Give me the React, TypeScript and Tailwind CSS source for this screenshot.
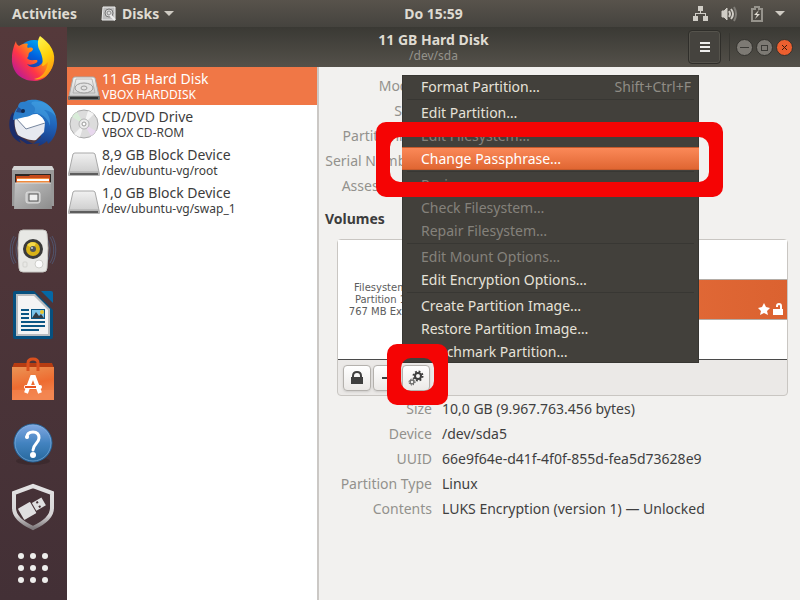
import type { ReactNode } from "react";

const devices = [
  { name: "11 GB Hard Disk", detail: "VBOX HARDDISK", kind: "disk", selected: true },
  { name: "CD/DVD Drive", detail: "VBOX CD-ROM", kind: "cd", selected: false },
  { name: "8,9 GB Block Device", detail: "/dev/ubuntu-vg/root", kind: "block", selected: false },
  { name: "1,0 GB Block Device", detail: "/dev/ubuntu-vg/swap_1", kind: "block", selected: false },
];

type Item = { label: string; disabled?: boolean; active?: boolean; shortcut?: string };

const menuGroups: Item[][] = [
  [{ label: "Format Partition…", shortcut: "Shift+Ctrl+F" }],
  [
    { label: "Edit Partition…" },
    { label: "Edit Filesystem…", disabled: true },
    { label: "Change Passphrase…", active: true },
  ],
  [
    { label: "Resize…", disabled: true },
    { label: "Check Filesystem…", disabled: true },
    { label: "Repair Filesystem…", disabled: true },
  ],
  [{ label: "Edit Mount Options…", disabled: true }, { label: "Edit Encryption Options…" }],
  [
    { label: "Create Partition Image…" },
    { label: "Restore Partition Image…" },
    { label: "Benchmark Partition…" },
  ],
];

const driveLabels = ["Model", "Size", "Partitioning", "Serial Number", "Assessment"];

const volumeFacts = [
  ["Size", "10,0 GB (9.967.763.456 bytes)"],
  ["Device", "/dev/sda5"],
  ["UUID", "66e9f64e-d41f-4f0f-855d-fea5d73628e9"],
  ["Partition Type", "Linux"],
  ["Contents", "LUKS Encryption (version 1) — Unlocked"],
];

function FirefoxIcon() {
  return (
    <svg width="48" height="48" viewBox="0 0 48 48" aria-hidden="true">
      <defs>
        <linearGradient id="ffBody" x1="1" y1="0.1" x2="0.1" y2="0.9">
          <stop offset="0" stopColor="#fff44f" />
          <stop offset="0.35" stopColor="#ff980e" />
          <stop offset="0.65" stopColor="#ff3647" />
          <stop offset="1" stopColor="#b5179e" />
        </linearGradient>
        <linearGradient id="ffGlobe" x1="0.8" y1="0" x2="0.3" y2="1">
          <stop offset="0" stopColor="#00b3f4" />
          <stop offset="0.5" stopColor="#0060df" />
          <stop offset="1" stopColor="#362b7d" />
        </linearGradient>
        <linearGradient id="ffTail" x1="0.3" y1="0" x2="0.7" y2="1">
          <stop offset="0" stopColor="#fff44f" />
          <stop offset="0.5" stopColor="#ffd20a" />
          <stop offset="1" stopColor="#ff8a16" />
        </linearGradient>
      </defs>
      <circle cx="25" cy="22" r="17" fill="url(#ffGlobe)" />
      <path
        d="M7 6c0 2 1 4 3 5 3-2 6-3 9-2-1 2-1 3 0 4 3-1 5 0 5 1 0 2-3 3-4 4-1 2 0 4-2 5 2 3 6 2 9 2 2 0 2 2 0 3-4 2-7 2-9 1 4 5 12 4 16-2 3-6 1-12-3-16 6 3 10 7 11 3 6 12-1 32-16 32C10 46 2 35 3 22c0-5 2-12 4-16z"
        fill="url(#ffBody)"
      />
      <path
        d="M31 1c4 3 9 7 12 13 5 10 1 21-6 27-5 3-9 4-12 3 8-1 13-8 14-17-2 2-4 4-6 4 2-7-1-13-3-17-2-5-1-10 1-13z"
        fill="url(#ffTail)"
      />
    </svg>
  );
}

function ThunderbirdIcon() {
  return (
    <svg width="48" height="48" viewBox="0 0 48 48" aria-hidden="true">
      <defs>
        <linearGradient id="tbBody" x1="0.6" y1="0" x2="0.4" y2="1">
          <stop offset="0" stopColor="#2e8fd8" />
          <stop offset="0.5" stopColor="#1f62b8" />
          <stop offset="1" stopColor="#17357d" />
        </linearGradient>
      </defs>
      <path d="M4 13C0 18-1 27 2 34c2 5 6 8 10 10l-2-4 8 5h6L8 36C5 31 5 24 6 18z" fill="#1b2d6b" />
      <path d="M14 4c2-1 4-3 7-3 15-2 27 9 27 24 0 8-3 15-9 20l-1-3c-3 3-6 4-9 5l2-3-7 1 8-7z" fill="url(#tbBody)" />
      <path d="M23 3c12-2 21 4 24 15-4-5-8-7-12-7 4 3 7 9 6 16-3-9-8-13-17-13l-6 2z" fill="#4aa8e8" opacity="0.5" />
      <path d="M6 18 28 15c4 2 7 5 8 9l-1 9-8 8c-6 1-13-2-18-5-3-5-4-12-3-18z" fill="#e6e9f0" />
      <path d="m6 18 22-3c4 2 7 5 8 9l-18 6z" fill="#fff" />
      <path d="m6 18 11 12 19-6" fill="none" stroke="#76869e" />
      <path d="M9 8c0-3 2-5 4-5 5-1 11 2 13 6 1 5-5 9-10 9L4 21C4 16 6 11 9 8z" fill="#2b7fcc" />
      <path d="m9 8-2 5 7 1-2-4z" fill="#244b8c" />
      <circle cx="14" cy="12" r="2" fill="#12294f" />
    </svg>
  );
}

function FilesIcon() {
  return (
    <svg width="48" height="48" viewBox="0 0 48 48" aria-hidden="true">
      <defs>
        <linearGradient id="flBody" x1="0" y1="0" x2="1" y2="1">
          <stop offset="0" stopColor="#c2c2c2" />
          <stop offset="1" stopColor="#8c8c8c" />
        </linearGradient>
      </defs>
      <path d="M5 3h38l2 3v37H3V6z" fill="#999" />
      <path d="M5 3h38l2 4H3z" fill="#d5d5d5" />
      <rect x="6" y="11" width="36" height="10" fill="#2b2725" />
      <path d="M7 13h13l1-1h20v9H7z" fill="#c4491b" />
      <rect x="8" y="15" width="32" height="2" fill="#f08a3c" />
      <rect x="8" y="16" width="32" height="2" fill="#fff" />
      <rect x="8" y="18" width="32" height="2" fill="#f08a3c" />
      <path d="M6 20h36l1 26H5z" fill="url(#flBody)" />
      <path d="M6 20h36" stroke="#dedede" />
      <rect x="17" y="29" width="14" height="11" rx="2" fill="#c6c6c6" stroke="#dedede" />
      <rect x="20" y="31" width="9" height="7" fill="#efefef" stroke="#555" />
    </svg>
  );
}

function RhythmboxIcon() {
  return (
    <svg width="48" height="48" viewBox="0 0 48 48" aria-hidden="true">
      <g fill="none" stroke="#536d98" opacity="0.55">
        <path d="M5 9c-5 8-5 20 0 28M7 10c-5 8-5 18 0 26M10 11c-4 8-4 16 0 24M43 9c5 8 5 20 0 28M41 10c5 8 5 18 0 26M38 11c4 8 4 16 0 24" />
      </g>
      <path d="M14 3h20q4 0 4 4l1 14-1 20q0 4-4 4H14q-4 0-4-4L9 21l1-14q0-4 4-4z" fill="#e8e8e5" stroke="#c8c8c4" />
      <circle cx="24" cy="22" r="10" fill="#3a3a3a" />
      <circle cx="24" cy="22" r="7" fill="#d8b217" />
      <path d="M18 18a7 7 0 0 1 9-2l-3 6z" fill="#f3d84a" />
      <circle cx="24" cy="22" r="3" fill="#4f5357" />
      <circle cx="23" cy="21" r="1" fill="#c9d2da" />
      <circle cx="30" cy="37" r="4" fill="#fbfbfb" stroke="#cfcfcb" />
      <rect x="14" y="35" width="4" height="5" rx="1" fill="none" stroke="#d3d3cf" />
    </svg>
  );
}

function WriterIcon() {
  return (
    <svg width="48" height="48" viewBox="0 0 48 48" aria-hidden="true">
      <path d="M6 0h19l19 19v27q0 2-2 2H6q-2 0-2-2V2q0-2 2-2z" fill="#06507f" />
      <path d="M32 0h10q2 0 2 2v10z" fill="#0568a5" />
      <path d="M7 3h19l15 15v27H7z" fill="#b9bcbf" />
      <path d="M9 5h16l14 14v24H9z" fill="#f4f4f4" />
      <g fill="#0b5684">
        <rect x="12" y="18" width="8" height="2" />
        <rect x="12" y="22" width="8" height="2" />
        <rect x="12" y="26" width="8" height="2" />
        <rect x="12" y="30" width="24" height="2" />
        <rect x="12" y="34" width="24" height="2" />
        <rect x="12" y="38" width="18" height="2" />
        <rect x="22" y="18" width="14" height="10" />
      </g>
      <rect x="23" y="19" width="12" height="8" fill="#7cc4ea" />
      <circle cx="33" cy="21" r="2" fill="#e7c52d" />
      <path d="m23 27 4-6 3 4 2-2 3 4z" fill="#333c44" />
    </svg>
  );
}

function SoftwareIcon() {
  return (
    <svg width="48" height="48" viewBox="0 0 48 48" aria-hidden="true">
      <defs>
        <linearGradient id="swBag" x1="0" y1="0" x2="0.3" y2="1">
          <stop offset="0" stopColor="#eb9455" />
          <stop offset="0.6" stopColor="#ee6c31" />
          <stop offset="1" stopColor="#f1824c" />
        </linearGradient>
      </defs>
      <path d="M5 8h38l2 5H3z" fill="#b63c12" />
      <path d="M3 12h42v33H3z" fill="url(#swBag)" />
      <path d="M3 35h42v10H3z" fill="#f58a55" opacity="0.5" />
      <path d="M19 16V8q0-4 5-4t5 4v8" fill="none" stroke="#d9501e" strokeWidth="3" />
      <path d="m17 38 6-16h2l6 16" fill="none" stroke="#fff" strokeWidth="4" />
      <rect x="15" y="30" width="18" height="4" rx="2" fill="#fff" />
      <rect x="16" y="31" width="11" height="2" fill="#e95420" />
    </svg>
  );
}

function HelpIcon() {
  return (
    <svg width="48" height="48" viewBox="0 0 48 48" aria-hidden="true">
      <defs>
        <linearGradient id="hpBall" x1="0" y1="0" x2="0" y2="1">
          <stop offset="0" stopColor="#81a8e2" />
          <stop offset="0.5" stopColor="#4383c0" />
          <stop offset="1" stopColor="#26689c" />
        </linearGradient>
      </defs>
      <ellipse cx="24" cy="42" rx="17" ry="4" fill="#000" opacity="0.15" />
      <circle cx="24" cy="24" r="19" fill="url(#hpBall)" stroke="#225f94" />
      <circle cx="24" cy="24" r="18" fill="none" stroke="#88b2dd" opacity="0.6" />
      <path d="M18 18q0-5 6-5t6 6c0 5-6 6-6 12" fill="none" stroke="#fff" strokeWidth="3" strokeLinecap="round" />
      <circle cx="18" cy="18" r="2" fill="#fff" />
      <circle cx="24" cy="36" r="3" fill="#fff" />
    </svg>
  );
}

function UsbShieldIcon() {
  return (
    <svg width="48" height="48" viewBox="0 0 48 48" aria-hidden="true">
      <defs>
        <linearGradient id="shRim" x1="0" y1="0" x2="0" y2="1">
          <stop offset="0" stopColor="#e3e2e3" />
          <stop offset="0.7" stopColor="#d6d4d5" />
          <stop offset="1" stopColor="#807a7d" />
        </linearGradient>
      </defs>
      <path d="M24 3 43 10v15c0 9-8 15-19 20C13 40 5 34 5 25V10z" fill="none" stroke="url(#shRim)" strokeWidth="4" />
      <g transform="rotate(-30 24 24)" fill="#e0dfe0">
        <rect x="10" y="18" width="14" height="13" rx="1" />
        <path fillRule="evenodd" d="M25 20h11v9H25zM29 21h2v2h-2zM29 26h2v2h-2z" />
      </g>
    </svg>
  );
}

function AppGridIcon() {
  return (
    <svg width="48" height="48" viewBox="0 0 48 48" aria-hidden="true" fill="#eeeeec">
      {[9, 21, 33].map((y) => [12, 24, 36].map((x) => <circle key={`${x}-${y}`} cx={x} cy={y} r="3" />))}
    </svg>
  );
}

function DeviceIcon({ kind }: { kind: string }) {
  if (kind === "cd") {
    return (
      <svg width="32" height="32" viewBox="0 0 32 32" aria-hidden="true">
        <circle cx="16" cy="16" r="14" fill="#dcdcdc" stroke="#a9a9a9" />
        <path d="M16 16 4 9a14 14 0 0 1 5-5z" fill="#d8ecd8" />
        <path d="m16 16 12 7a14 14 0 0 1-5 5z" fill="#e8d8ee" />
        <path d="m16 16 4-13a14 14 0 0 1 6 3z" fill="#f4f4f4" />
        <path d="m16 16-4 13a14 14 0 0 1-6-3z" fill="#f4f4f4" />
        <circle cx="16" cy="16" r="5" fill="#ececec" stroke="#b4b4b4" />
        <circle cx="16" cy="16" r="2" fill="#fff" stroke="#999" />
      </svg>
    );
  }
  const disk = kind === "disk";
  return (
    <svg width="32" height="32" viewBox="0 0 32 32" aria-hidden="true">
      <defs>
        <linearGradient id="dkTop" x1="0" y1="0" x2="0" y2="1">
          <stop offset="0" stopColor="#f1f1f1" />
          <stop offset="1" stopColor="#cfcfcf" />
        </linearGradient>
      </defs>
      <path d="M7 7h18q1 0 2 1l4 18H1L5 8q1-1 2-1z" fill="url(#dkTop)" stroke="#a8a8a8" />
      <rect x="0" y="26" width="32" height="4" rx="1" fill={disk ? "#6d6d6d" : "#b5b5b5"} />
      <rect x="2" y="27" width="28" height="2" fill={disk ? "#2f2f2f" : "#5d5d5d"} />
      {disk && (
        <g fill="none" stroke="#9c9c9c">
          <path d="M8 9h16l3 14H5z" opacity="0.6" />
          <ellipse cx="16" cy="18" rx="9" ry="5" fill="#e3e3e3" />
          <ellipse cx="16" cy="18" rx="3" ry="2" />
        </g>
      )}
    </svg>
  );
}

/* Rounded red frame that calls out one region of the window. */
function Callout({ w, h, ringX, ringY }: { w: number; h: number; ringX: number; ringY: number }) {
  const r = 10;
  const box = (x: number, y: number, bw: number, bh: number) =>
    `M${x + r} ${y}h${bw - 2 * r}a${r} ${r} 0 0 1 ${r} ${r}v${bh - 2 * r}a${r} ${r} 0 0 1 -${r} ${r}h-${bw - 2 * r}a${r} ${r} 0 0 1 -${r} -${r}v-${bh - 2 * r}a${r} ${r} 0 0 1 ${r} -${r}z`;
  return (
    <svg width={w} height={h} aria-hidden="true">
      <path
        fillRule="evenodd"
        fill="#f50404"
        d={box(0, 0, w, h) + box(ringX, ringY, w - 2 * ringX, h - 2 * ringY)}
      />
    </svg>
  );
}

function GearsIcon() {
  return (
    <svg width="16" height="16" viewBox="0 0 16 16" fill="none" stroke="#3f3f3f" aria-hidden="true">
      <circle cx="10" cy="6" r="3" strokeWidth="2" />
      <circle cx="10" cy="6" r="4.500" strokeWidth="2" strokeDasharray="1.770 1.770" />
      <circle cx="4" cy="12" r="2" strokeWidth="1" />
      <circle cx="4" cy="12" r="3" strokeWidth="1" strokeDasharray="1.200 1.200" />
    </svg>
  );
}

function ToolButton({ label, children }: { label: string; children: ReactNode }) {
  return (
    <button
      type="button"
      aria-label={label}
      className="flex h-[26px] w-[28px] items-center justify-center rounded border border-[#b4b1ad] bg-gradient-to-b from-white to-[#ebe9e7] text-[#3f3f3f] shadow-sm"
    >
      {children}
    </button>
  );
}

function TopBar() {
  return (
    <header className="grid h-[27px] shrink-0 grid-cols-[67px_1fr_auto_1fr] items-center bg-gradient-to-b from-[#58534c] to-[#45433e] text-[14px] font-bold text-[#dfdbd2]">
      <nav className="col-span-2 flex items-center pl-3">
        <button type="button">Activities</button>
        <button type="button" className="ml-6 flex items-center">
          <svg width="16" height="16" viewBox="0 0 16 16" aria-hidden="true">
            <path d="M2 1h12v13H1z" fill="#bdbdbd" stroke="#efefef" />
            <circle cx="8" cy="7" r="4" fill="#dadada" stroke="#777" />
            <circle cx="8" cy="7" r="2" fill="none" stroke="#888" />
            <path d="m9 9 5 5" stroke="#eee" strokeWidth="2" />
          </svg>
          <span className="ml-[5px]">Disks</span>
          <svg className="ml-[5px]" width="10" height="6" aria-hidden="true">
            <path d="M0 0h10L5 5z" fill="#cfcbc3" />
          </svg>
        </button>
      </nav>
      <time>Do 15:59</time>
      <div className="flex items-center justify-end pr-[15px]">
        <svg width="16" height="16" viewBox="0 0 16 16" fill="#d0cdc6" aria-hidden="true">
          <path d="M5 0h5v5H5zM0 10h5v5H0zM10 10h5v5h-5zM7 5h1v3H7zM2 7h11v3h-1V8H3v2H2z" />
        </svg>
        <svg className="ml-3" width="16" height="16" viewBox="0 0 16 16" fill="none" stroke="#d0cdc6" aria-hidden="true">
          <path d="M1 5h2l3-3v12l-3-3H1z" fill="#d0cdc6" />
          <path d="M8 5q2 3 0 6M10 3q4 5 0 10" strokeWidth="2" />
          <path d="M13 1q4 7 0 14" strokeWidth="2" stroke="#7f7c76" />
        </svg>
        <svg className="ml-[14px]" width="12" height="16" viewBox="0 0 12 16" fill="none" stroke="#96938c" aria-hidden="true">
          <path d="M1 3h3V1h4v2h3v12H1z" strokeWidth="2" />
          <path d="M8 4 3 9h3l-2 4 5-5H6z" fill="#dfdbd2" stroke="none" />
        </svg>
        <svg className="ml-3" width="10" height="6" aria-hidden="true">
          <path d="M0 0h10L5 5z" fill="#cfcbc3" />
        </svg>
      </div>
    </header>
  );
}

function Dock() {
  return (
    <nav aria-label="Dock" className="flex w-[67px] shrink-0 flex-col items-start gap-4 bg-gradient-to-b from-[#55393b] to-[#433036] pt-2 pl-[9px]">
      <FirefoxIcon />
      <ThunderbirdIcon />
      <FilesIcon />
      <RhythmboxIcon />
      <WriterIcon />
      <SoftwareIcon />
      <HelpIcon />
      <UsbShieldIcon />
      <AppGridIcon />
    </nav>
  );
}

function WindowHeader() {
  const round = "flex size-[17px] items-center justify-center rounded-full border border-[#33322e]";
  return (
    <header className="grid h-10 shrink-0 grid-cols-[1fr_auto_1fr] items-center bg-gradient-to-b from-[#3a3934] to-[#54514a]">
      <span />
      <div className="text-center">
        <h1 className="text-[14px] leading-[16px] font-bold text-[#dfdbd2]">11 GB Hard Disk</h1>
        <p className="text-[12px] leading-[15px] text-[#95938c]">/dev/sda</p>
      </div>
      <div className="flex items-center justify-end pr-[7px]">
        <button
          type="button"
          aria-label="Menu"
          className="flex h-[34px] w-[33px] items-center justify-center rounded border border-[#2f2e2a] bg-[#45433e] inset-ring inset-ring-[#55534c]"
        >
          <svg width="10" height="10" fill="#eeeeec" aria-hidden="true">
            <path d="M0 0h10v2H0zM0 4h10v2H0zM0 8h10v2H0z" />
          </svg>
        </button>
        <span className="mr-1.5 ml-2 h-7 w-px bg-[#383732]" />
        <div className="flex gap-[3px]">
          <button type="button" aria-label="Minimize" className={`${round} bg-[#7d7a74]`}>
            <svg width="9" height="9" fill="#3c3b37" aria-hidden="true">
              <path d="M0 4h9v1H0z" />
            </svg>
          </button>
          <button type="button" aria-label="Maximize" className={`${round} bg-[#7d7a74]`}>
            <svg width="9" height="9" fill="#3c3b37" aria-hidden="true">
              <path fillRule="evenodd" d="M1 2h7v6H1zM2 3h5v4H2z" />
            </svg>
          </button>
          <button type="button" aria-label="Close" className={`${round} bg-[#ec5f2f]`}>
            <svg width="9" height="9" stroke="#3c1a0c" aria-hidden="true">
              <path d="m2 2 5 5M7 2 2 7" />
            </svg>
          </button>
        </div>
      </div>
    </header>
  );
}

function DeviceList() {
  return (
    <ul className="w-[252px] shrink-0 border-r-2 border-[#cbc8c5] bg-white">
      {devices.map((d) => (
        <li key={d.detail}>
          <button
            type="button"
            className={`flex h-[38px] w-full items-center gap-[2px] pl-px text-left whitespace-nowrap ${
              d.selected ? "bg-[#f07746] text-white" : "text-[#3c3c3c]"
            }`}
          >
            <DeviceIcon kind={d.kind} />
            <span>
              <span className="block text-[14px] leading-[17px]">{d.name}</span>
              <span className="block text-[12px] leading-[15px]">{d.detail}</span>
            </span>
          </button>
        </li>
      ))}
    </ul>
  );
}

function PartitionMenu() {
  return (
    <div role="menu" className="absolute top-2 left-[83px] w-[297px] bg-[#42403b] text-[14px] leading-[23px] whitespace-nowrap text-[#e6e2d9] inset-ring inset-ring-[#373632]">
      {menuGroups.map((group, i) => (
        <div key={group[0].label} role="group">
          {i > 0 && (
            <div className="px-[5px] py-px">
              <div className="h-px bg-[#383733]" />
            </div>
          )}
          {group.map((item) => (
            <button
              key={item.label}
              type="button"
              role="menuitem"
              disabled={item.disabled}
              className={`flex h-[23px] w-full items-center justify-between pr-2 pl-[19px] ${
                item.active
                  ? "border-y border-[#c65a2c] bg-gradient-to-b from-[#fb8958] to-[#e06632] text-white"
                  : item.disabled
                    ? "text-[#85827b]"
                    : ""
              }`}
            >
              <span>{item.label}</span>
              {item.shortcut && <span className="text-[#8f8c85]">{item.shortcut}</span>}
            </button>
          ))}
        </div>
      ))}
    </div>
  );
}

function Volumes() {
  return (
    <section className="mr-3 ml-[18px] rounded border border-[#c9c6c2] bg-[#ebe9e7]">
      <div className="flex h-[120px] border-b border-[#4a4a4a] bg-white">
        <div className="flex w-[86px] flex-col justify-center border-r border-[#b4b1ad] text-center font-['DejaVu_Sans'] text-[10px] leading-[12px] whitespace-nowrap text-[#5c5c5c]">
          <span>Filesystem</span>
          <span>Partition 1</span>
          <span>767 MB Ext4</span>
        </div>
        <div className="flex flex-1 flex-col">
          <div className="flex-1" />
          <div className="flex h-[41px] items-end justify-end gap-[3px] border-y border-[#b4aca6] bg-gradient-to-r from-[#ee7744] to-[#db6230] pr-1 pb-1">
            <svg width="12" height="12" viewBox="0 0 12 12" fill="#fff" aria-hidden="true">
              <path d="m6 0 2 4 4 1-3 3 1 4-4-2-4 2 1-4-3-3 4-1z" />
            </svg>
            <svg width="10" height="12" viewBox="0 0 10 12" fill="#fff" aria-hidden="true">
              <path d="M0 6h7V3q0-1-1-1T5 3v1H3V3q0-3 3-3t3 3v3h1v6H0z" />
            </svg>
          </div>
          <div className="flex-1" />
        </div>
      </div>
      <div className="flex h-[35px] items-center px-[5px]">
        <ToolButton label="Lock">
          <svg width="12" height="14" viewBox="0 0 12 14" fill="#3f3f3f" aria-hidden="true">
            <path d="M0 6h1V5q0-5 5-5t5 5v1h1v7H0zM3 6h6V5q0-3-3-3T3 5z" />
          </svg>
        </ToolButton>
        <span className="mr-px ml-[2px]">
          <ToolButton label="Delete partition">
            <svg width="10" height="2" aria-hidden="true">
              <path d="M0 0h10v2H0z" fill="#3f3f3f" />
            </svg>
          </ToolButton>
        </span>
        <ToolButton label="Additional partition options">
          <GearsIcon />
        </ToolButton>
      </div>
    </section>
  );
}

function VolumePane() {
  return (
    <main className="relative min-w-0 flex-1 bg-[#f2f1ef] text-[14px] leading-[25px] text-[#3f3f3f]">
      <ul className="w-[101px] pt-1.5 text-right whitespace-nowrap text-[#93918d]">
        {driveLabels.map((label) => (
          <li key={label}>{label}</li>
        ))}
      </ul>
      <h2 className="mb-2 pt-2 pl-1.5 font-bold text-[#3c3c3c]">Volumes</h2>
      <Volumes />
      <dl className="grid grid-cols-[113px_1fr] gap-x-[10px] whitespace-nowrap">
        {volumeFacts.map(([label, value]) => (
          <div key={label} className="contents">
            <dt className="text-right text-[#93918d]">{label}</dt>
            <dd>{value}</dd>
          </div>
        ))}
      </dl>
      <PartitionMenu />
      <div className="pointer-events-none absolute top-[55px] left-[57px]">
        <Callout w={347} h={75} ringX={14} ringY={15} />
      </div>
      <div className="pointer-events-none absolute top-[277px] left-[68px]">
        <Callout w={61} h={61} ringX={14} ringY={14} />
      </div>
    </main>
  );
}

export default function App() {
  return (
    <div className="flex h-screen flex-col overflow-hidden font-['Noto_Sans',sans-serif]">
      <TopBar />
      <div className="flex min-h-0 flex-1">
        <Dock />
        <div className="flex min-w-0 flex-1 flex-col">
          <WindowHeader />
          <div className="flex min-h-0 flex-1">
            <DeviceList />
            <VolumePane />
          </div>
        </div>
      </div>
    </div>
  );
}
